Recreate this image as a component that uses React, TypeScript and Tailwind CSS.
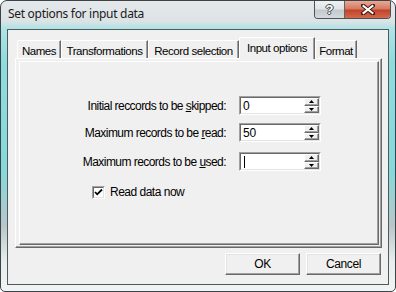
import React from 'react';

const ui = "font-['Liberation_Sans',Arial,sans-serif] text-[11px] tracking-[-0.3px] text-black";

const tabs = [
  { label: 'Names', w: 'w-[44px]' },
  { label: 'Transformations', w: 'w-[87px]' },
  { label: 'Record selection', w: 'w-[91px]' },
  { label: 'Input options', w: 'w-[76px]', active: true },
  { label: 'Format', w: 'w-[42px]' },
];

function SpinButton({ up }: { up?: boolean }) {
  return (
    <div className="flex flex-1 items-center justify-center border-t border-l border-t-white border-l-white border-r border-b border-r-[#696969] border-b-[#696969] bg-[#f0f0f0] shadow-[inset_-1px_-1px_0_#a0a0a0]">
      <svg width="5" height="3" viewBox="0 0 5 3">
        {up ? <path d="M2.5 0 L5 3 L0 3 Z" fill="#000" /> : <path d="M0 0 L5 0 L2.5 3 Z" fill="#000" />}
      </svg>
    </div>
  );
}

function SpinBox({ value, caret }: { value?: string; caret?: boolean }) {
  return (
    <div className="flex h-[19px] w-[82px] border-t border-l border-t-[#a0a0a0] border-l-[#a0a0a0] border-r border-b border-r-white border-b-white">
      <div className="flex flex-1 border-t border-l border-t-[#696969] border-l-[#696969] border-r border-b border-r-[#e3e3e3] border-b-[#e3e3e3] bg-white">
        <div className="flex flex-1 items-center pl-[2px] text-[12px] tracking-[-0.2px]">
          {value}
          {caret && <span className="ml-px h-[12px] w-px bg-black" />}
        </div>
        <div className="flex w-[15px] flex-col">
          <SpinButton up />
          <SpinButton />
        </div>
      </div>
    </div>
  );
}

function FieldRow({ before, key1, after, value, caret, mt }: { before: string; key1: string; after: string; value?: string; caret?: boolean; mt: string }) {
  return (
    <div className={`flex items-center ${mt}`}>
      <div className="w-[206px] whitespace-nowrap text-right text-[12px] tracking-[-0.55px]">
        {before}
        <u className="underline-offset-[1px]">{key1}</u>
        {after}
      </div>
      <div className="ml-[13px]">
        <SpinBox value={value} caret={caret} />
      </div>
    </div>
  );
}

function PushButton({ children }: { children: React.ReactNode }) {
  return (
    <div className="flex h-[22px] w-[75px] items-center justify-center border-t border-l border-t-white border-l-white border-r border-b border-r-[#696969] border-b-[#696969] bg-[#f0f0f0] text-[12px] tracking-[-0.4px] shadow-[inset_-1px_-1px_0_#a0a0a0,inset_1px_1px_0_#e3e3e3]">
      {children}
    </div>
  );
}

export default function App() {
  return (
    <div className="h-[292px] w-[396px] bg-white">
      <div className="flex h-full w-full flex-col rounded-t-[7px] rounded-b-[5px] border border-[#3a4447] bg-[linear-gradient(to_bottom,#e4e8ea_0px,#dde3e5_20px,#b2e3e5_27px,#8fdcdf_60px,#86d8db_170px,#b9c6c9_225px,#e9ecec_260px,#f3f4f4_292px)]">
        {/* title bar */}
        <div className="flex h-[28px] shrink-0 items-start justify-between pl-[7px] pr-[4px]">
          <span className="mt-[5px] font-['Noto_Sans','Open_Sans',sans-serif] text-[12px] leading-[16px] tracking-[-0.3px] text-[#1b1b1b]">
            Set options for input data
          </span>
          <div className="flex h-[18px] overflow-hidden rounded-b-[4px] border border-t-0 border-[#4a5356]">
            <div className="flex w-[30px] items-center justify-center border-r border-[#5b6467] bg-[linear-gradient(to_bottom,#eef1f2_0%,#dfe4e6_45%,#c3cacd_55%,#d3d9dc_100%)]">
              <span className="font-['Liberation_Sans',Arial,sans-serif] text-[13px] font-bold leading-none text-white [text-shadow:1px_0_0_#3d4649,-1px_0_0_#3d4649,0_1px_0_#3d4649,0_-1px_0_#3d4649]">
                ?
              </span>
            </div>
            <div className="flex w-[45px] items-center justify-center bg-[linear-gradient(to_bottom,#e9a995_0%,#d67a62_45%,#c2432a_55%,#d4684c_100%)]">
              <svg width="14" height="11" viewBox="0 0 14 11">
                <path d="M2 1.5 L12 9.5 M12 1.5 L2 9.5" stroke="#3b1a14" strokeWidth="4" strokeLinecap="square" />
                <path d="M2.5 2 L11.5 9 M11.5 2 L2.5 9" stroke="#fff" strokeWidth="2" strokeLinecap="square" />
              </svg>
            </div>
          </div>
        </div>

        {/* client area */}
        <div className={`mx-[6px] h-[256px] shrink-0 border border-[#4b5b5e] bg-[#f0f0f0] ${ui}`}>
          <div className="pl-[7px] pr-[6px] pt-[7px]">
            {/* tabs */}
            <div className="flex h-[21px] items-end pl-[2px] text-[11.5px] tracking-[-0.45px]">
              {tabs.map(t =>
                t.active ? (
                  <div
                    key={t.label}
                    className={`${t.w} relative z-10 -mb-px flex h-[22px] justify-center rounded-tl-[2px] border-t border-l border-t-white border-l-white border-r border-r-[#696969] bg-[#f0f0f0] pt-[2px] shadow-[inset_-1px_0_0_#a0a0a0]`}
                  >
                    {t.label}
                  </div>
                ) : (
                  <div
                    key={t.label}
                    className={`${t.w} flex h-[18px] justify-center rounded-tl-[2px] border-t border-l border-t-white border-l-white border-r border-r-[#696969] pt-[2px] shadow-[inset_-1px_0_0_#a0a0a0]`}
                  >
                    {t.label}
                  </div>
                )
              )}
            </div>

            {/* tab page */}
            <div className="h-[190px] border-t border-l border-t-white border-l-white border-r border-b border-r-[#696969] border-b-[#696969] pb-[2px] pl-[3px] pr-[2px] pt-[2px] shadow-[inset_-1px_-1px_0_#a0a0a0]">
              <div className="h-full border-t border-l border-t-white border-l-white border-r border-b border-r-[#696969] border-b-[#696969] shadow-[inset_-1px_-1px_0_#a0a0a0]">
                <FieldRow mt="mt-[34px]" before="Initial reccords to be " key1="s" after="kipped:" value="0" />
                <FieldRow mt="mt-[8px]" before="Maximum records to be " key1="r" after="ead:" value="50" />
                <FieldRow mt="mt-[10px]" before="Maximum records to be " key1="u" after="sed:" caret />

                <div className="mt-[12px] flex items-center pl-[72px]">
                  <div className="flex h-[13px] w-[13px] border-t border-l border-t-[#a0a0a0] border-l-[#a0a0a0] border-r border-b border-r-white border-b-white">
                    <div className="flex flex-1 items-center justify-center border-t border-l border-t-[#696969] border-l-[#696969] border-r border-b border-r-[#e3e3e3] border-b-[#e3e3e3] bg-white">
                      <svg width="9" height="9" viewBox="0 0 9 9">
                        <path d="M1 4 L3.2 6.3 L8 1.5" fill="none" stroke="#000" strokeWidth="1.8" />
                      </svg>
                    </div>
                  </div>
                  <span className="ml-[5px] text-[12px] tracking-[-0.5px]">Read data now</span>
                </div>
              </div>
            </div>

            {/* buttons */}
            <div className="mt-[5px] flex justify-end gap-[6px] pr-px">
              <PushButton>OK</PushButton>
              <PushButton>Cancel</PushButton>
            </div>
          </div>
        </div>
      </div>
    </div>
  );
}
